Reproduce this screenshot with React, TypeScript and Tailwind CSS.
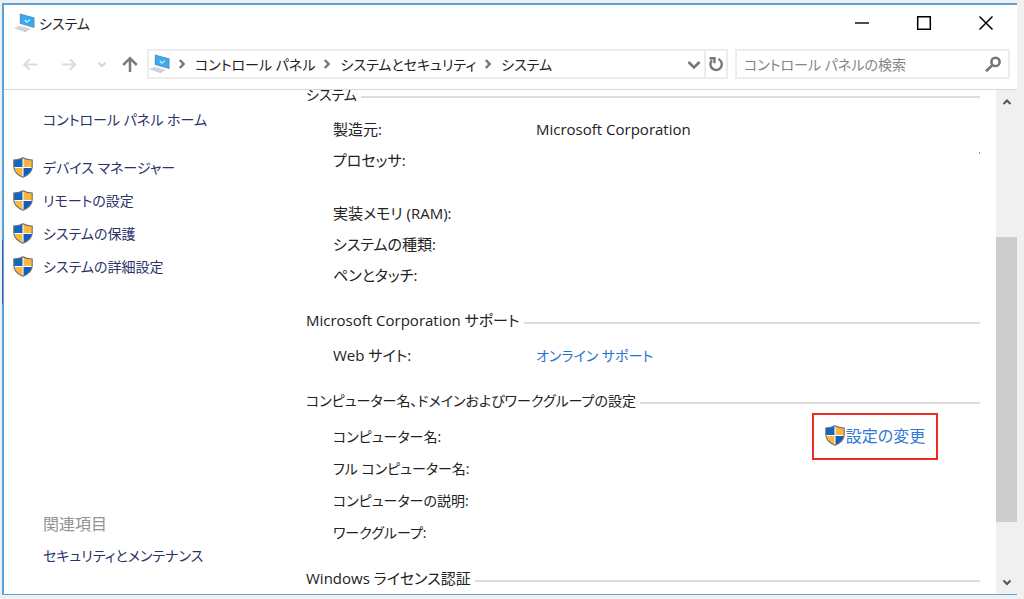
import type { ReactNode } from "react";

function Shield() {
  return (
    <svg viewBox="0 0 20 21" className="h-[21px] w-5 shrink-0" aria-hidden="true">
      <clipPath id="shield-clip">
        <path d="M10 .8C7.500 2.300 4.500 2.900 .8 3v6.500c0 5.200 3.700 8.500 9.200 10.700 5.500-2.200 9.200-5.500 9.200-10.700V3C15.500 2.900 12.500 2.300 10 .8z" />
      </clipPath>
      <g clipPath="url(#shield-clip)">
        <path d="M0 0h10v10.500H0z" fill="#0f68c4" />
        <path d="M10 0h10v10.500H10z" fill="#fdb83a" />
        <path d="M0 10.500h10V21H0z" fill="#fdb83a" />
        <path d="M10 10.500h10V21H10z" fill="#0c5fc0" />
        <path d="M10 0v21M0 10.500h20" stroke="#fff" strokeWidth="1.100" />
      </g>
      <path
        d="M10 .8C7.500 2.300 4.500 2.900 .8 3v6.500c0 5.200 3.700 8.500 9.200 10.700 5.500-2.200 9.200-5.500 9.200-10.700V3C15.500 2.900 12.500 2.300 10 .8z"
        fill="none"
        stroke="#6b6f72"
        strokeWidth="1.100"
      />
    </svg>
  );
}

function Computer() {
  return (
    <svg viewBox="0 0 21 20" className="h-5 w-[21px] shrink-0" aria-hidden="true">
      <path d="M0 15l6-2.300 11 3.300-3.500 1.500-2 1.700z" fill="#c6cbcf" />
      <path d="M1.500 15.200l5-1.600 8 2.500M4.500 16.500l4.500-1.700M8 17.600l4-1.600" stroke="#e9ecee" strokeWidth=".6" fill="none" />
      <path d="M5.800 .6l14.700 3.900V15L5.800 10.800z" fill="#6c8597" />
      <path d="M6.500 1.500l13.100 3.500v9L6.500 10.300z" fill="#33abf5" />
      <path d="M10.800 7l2 2.200 3.200-2.600" stroke="#d8f0ff" strokeWidth="1.200" fill="none" />
    </svg>
  );
}

function Glyph({ d, className, width = "2" }: { d: string; className: string; width?: string }) {
  return (
    <svg viewBox="0 0 16 16" className={`h-4 w-4 shrink-0 ${className}`} fill="none" stroke="currentColor" strokeWidth={width} aria-hidden="true">
      <path d={d} />
    </svg>
  );
}

function Crumb({ children }: { children: ReactNode }) {
  return (
    <>
      <Glyph d="M5.800 4l3.800 4-3.800 4" className="text-[#777]" width="2.500" />
      <a href="#" className="pr-1 pl-[5px]">
        {children}
      </a>
    </>
  );
}

function Heading({ children }: { children: ReactNode }) {
  return (
    <h2 className="flex h-8 items-center gap-1 whitespace-nowrap">
      {children}
      <span className="mt-[6px] h-[2px] flex-1 bg-[#dcdcdc]" />
    </h2>
  );
}

function Row({ label, children, className = "h-[31px]" }: { label: string; children?: ReactNode; className?: string }) {
  return (
    <div className={`grid grid-cols-[203px_1fr] leading-[31px] ${className}`}>
      <dt>{label}</dt>
      <dd>{children}</dd>
    </div>
  );
}

const tasks = ["デバイス マネージャー", "リモートの設定", "システムの保護", "システムの詳細設定"];

export default function App() {
  return (
    <div className="relative flex h-screen min-h-[500px] bg-[#f0f0f0] pt-[3px] pr-[7px] pb-1 pl-[2px] font-['Open_Sans','Noto_Sans_CJK_JP',sans-serif] text-[15px] text-[#222] [font-feature-settings:'palt']">
      <div className="flex min-w-0 flex-1 flex-col border-t-2 border-b border-l-2 border-[#5ba3db] bg-white">
        <header className="border-b border-[#d9d9d9] text-[14px]">
          <div className="flex h-9 items-center pl-[10px]">
            <Computer />
            <h1 className="flex-1 pl-1">システム</h1>
            <button aria-label="最小化" className="flex h-8 w-[62px] items-center justify-center">
              <Glyph d="M1 8h14" className="text-black" width="1.400" />
            </button>
            <button aria-label="最大化" className="flex h-8 w-[62px] items-center justify-center">
              <Glyph d="M1.700 1.700h12.600v12.600H1.700z" className="text-black" width="1.500" />
            </button>
            <button aria-label="閉じる" className="flex h-8 w-[62px] items-center justify-center">
              <Glyph d="M1.500 1.500l13 13M14.500 1.500l-13 13" className="text-black" width="1.500" />
            </button>
          </div>
          <div className="flex h-12 items-start gap-[7px] pt-2 pr-[7px]">
            <nav className="flex h-[30px] w-[136px] items-center pl-[18px]" aria-label="移動">
              <button aria-label="戻る">
                <Glyph d="M15.500 8.500H2.500M7.500 3.300L2.300 8.500l5.200 5.200" className="text-[#dcdcdc]" />
              </button>
              <button aria-label="進む" className="ml-[23px]">
                <Glyph d="M1 8.500h13M9 3.300l5.200 5.200L9 13.700" className="text-[#dcdcdc]" />
              </button>
              <button aria-label="履歴" className="ml-[17px]">
                <Glyph d="M4.500 6.700L8 10.200l3.500-3.500" className="text-[#d5d5d5]" />
              </button>
              <button aria-label="上へ" className="ml-3">
                <Glyph d="M8 16V2.500M1.200 9L8 2.200 14.800 9" className="text-[#7b7b7b]" width="2.500" />
              </button>
            </nav>
            <div className="flex h-[30px] min-w-0 flex-1 items-center border-2 border-[#ececec]">
              <div className="flex min-w-0 flex-1 items-center whitespace-nowrap">
                <span className="mr-1 flex">
                  <Computer />
                </span>
                <Crumb>コントロール パネル</Crumb>
                <Crumb>システムとセキュリティ</Crumb>
                <Crumb>システム</Crumb>
              </div>
              <button aria-label="以前の場所" className="pr-[2px]">
                <Glyph d="M2.500 6L8 11.500 13.500 6" className="text-[#777]" width="2.600" />
              </button>
              <button aria-label="最新の情報に更新" className="flex h-full items-center border-l-2 border-[#ececec] px-[2px]">
                <Glyph d="M10.300 3A5.700 5.700 0 1 1 4 4.300M1.500 2.300H6.500v5" className="text-[#777]" width="2.400" />
              </button>
            </div>
            <label className="flex h-[30px] w-[275px] items-center border-2 border-[#ececec] px-[7px]">
              <input
                type="search"
                aria-label="検索"
                placeholder="コントロール パネルの検索"
                className="min-w-0 flex-1 outline-none placeholder:text-[#858585]"
              />
              <Glyph d="M10.500 1.800a4.100 4.100 0 1 1 0 8.200 4.100 4.100 0 0 1 0-8.200zM7.500 9L1 15.300" className="text-[#777]" width="2.600" />
            </label>
          </div>
        </header>
        <div className="flex min-h-0 flex-1">
          <aside className="flex w-[302px] shrink-0 flex-col pl-[9px] text-[14px] text-[#2b3266]">
            <a href="#" className="mt-[14px] pl-[30px] leading-8">
              コントロール パネル ホーム
            </a>
            <ul className="mt-[15px]">
              {tasks.map((task) => (
                <li key={task}>
                  <a href="#" className="flex h-[33px] items-center gap-[10px]">
                    <Shield />
                    {task}
                  </a>
                </li>
              ))}
            </ul>
            <div className="mt-auto mb-[22px] pl-[30px] leading-8">
              <h2 className="text-base/8 text-[#929292]">関連項目</h2>
              <a href="#">セキュリティとメンテナンス</a>
            </div>
          </aside>
          <main className="min-w-0 flex-1 overflow-hidden pr-4">
            <div className="-mt-3 flex flex-col gap-[13px]">
              <section>
                <Heading>
                  <span className="text-[14px]">システム</span>
                </Heading>
                <dl className="mt-1 pl-[27px]">
                  <Row label="製造元:">Microsoft Corporation</Row>
                  <Row label="プロセッサ:" className="h-[53px]">
                    <span className="mt-[7px] ml-auto block h-[2px] w-px bg-[#999]" />
                  </Row>
                  <Row label="実装メモリ (RAM):" />
                  <Row label="システムの種類:" />
                  <Row label="ペンとタッチ:" />
                </dl>
              </section>
              <section>
                <Heading>Microsoft Corporation サポート</Heading>
                <dl className="mt-1 pl-[27px]">
                  <Row label="Web サイト:">
                    <a href="#" className="text-[14px] text-[#1f72d2]">
                      オンライン サポート
                    </a>
                  </Row>
                </dl>
              </section>
              <section className="text-[14px]">
                <Heading>コンピューター名、ドメインおよびワークグループの設定</Heading>
                <div className="mt-1 flex items-start justify-between pr-[42px] pl-[27px]">
                  <dl className="pt-px">
                    <Row label="コンピューター名:" className="h-8" />
                    <Row label="フル コンピューター名:" className="h-8" />
                    <Row label="コンピューターの説明:" className="h-8" />
                    <Row label="ワークグループ:" className="h-8" />
                  </dl>
                  <a href="#" className="-mt-[7px] flex h-[47px] w-[126px] items-center justify-center gap-px border-2 border-[#ee2b22] pb-[2px] text-base whitespace-nowrap text-[#3079d2]">
                    <Shield />
                    設定の変更
                  </a>
                </div>
              </section>
              <section>
                <Heading>Windows ライセンス認証</Heading>
              </section>
            </div>
          </main>
          <div className="flex w-[21px] shrink-0 flex-col items-center bg-[#f0f0f0]">
            <button aria-label="上にスクロール" className="flex h-6 items-center">
              <Glyph d="M4.500 10L8 6.500l3.500 3.500" className="text-[#555]" />
            </button>
            <div className="flex w-full flex-1 flex-col">
              <div className="flex-[123]" />
              <div className="flex-[286] bg-[#cdcdcd]" />
              <div className="flex-[48]" />
            </div>
            <button aria-label="下にスクロール" className="flex h-6 items-center">
              <Glyph d="M4.500 6.500L8 10l3.500-3.500" className="text-[#555]" />
            </button>
          </div>
        </div>
      </div>
      <span className="absolute top-60 left-[2px] h-16 w-px bg-[#3d5fa5]" />
    </div>
  );
}
